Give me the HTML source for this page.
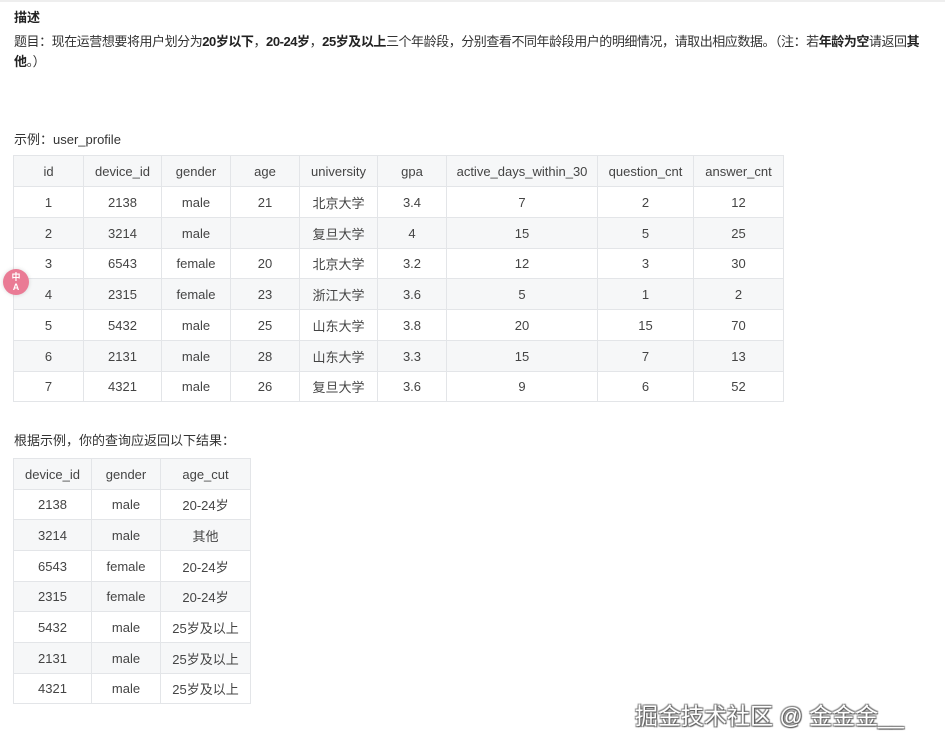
<!DOCTYPE html>
<html><head><meta charset="utf-8"><style>
body{margin:0;width:945px;height:747px;background:#fff;font-family:"Liberation Sans","Noto Sans CJK SC",sans-serif;color:#333;position:relative;overflow:hidden}
.t{position:absolute;font-size:13px}
table{position:absolute;border-collapse:collapse;table-layout:fixed;font-size:13px;color:#444}
td{border:1px solid #e3e5e8;text-align:center;padding:0;white-space:nowrap}
tr.h td,tr.g td{background:#f6f7f8}
b{font-weight:bold;color:#222}
</style></head><body>
<div style="position:absolute;left:0;top:0;width:945px;height:2px;background:#eee"></div>
<div class="t" style="left:14px;top:7px;font-weight:bold;color:#222">描述</div>
<div class="t" style="left:14px;top:32px;width:928px;line-height:20px;letter-spacing:-0.45px">题目：现在运营想要将用户划分为<b>20岁以下</b>，<b>20-24岁</b>，<b>25岁及以上</b>三个年龄段，分别查看不同年龄段用户的明细情况，请取出相应数据。（注：若<b>年龄为空</b>请返回<b>其他</b>。）</div>
<div class="t" style="left:14px;top:129px">示例：user_profile</div>
<table style="left:13px;top:155px;width:770px">
<colgroup><col style="width:70px"><col style="width:78px"><col style="width:69px"><col style="width:69px"><col style="width:78px"><col style="width:69px"><col style="width:151px"><col style="width:96px"><col style="width:90px"></colgroup>
<tr class="h" style="height:31px"><td>id</td><td>device_id</td><td>gender</td><td>age</td><td>university</td><td>gpa</td><td>active_days_within_30</td><td>question_cnt</td><td>answer_cnt</td></tr>
<tr style="height:31px"><td>1</td><td>2138</td><td>male</td><td>21</td><td>北京大学</td><td>3.4</td><td>7</td><td>2</td><td>12</td></tr>
<tr class="g" style="height:31px"><td>2</td><td>3214</td><td>male</td><td></td><td>复旦大学</td><td>4</td><td>15</td><td>5</td><td>25</td></tr>
<tr style="height:30px"><td>3</td><td>6543</td><td>female</td><td>20</td><td>北京大学</td><td>3.2</td><td>12</td><td>3</td><td>30</td></tr>
<tr class="g" style="height:31px"><td>4</td><td>2315</td><td>female</td><td>23</td><td>浙江大学</td><td>3.6</td><td>5</td><td>1</td><td>2</td></tr>
<tr style="height:31px"><td>5</td><td>5432</td><td>male</td><td>25</td><td>山东大学</td><td>3.8</td><td>20</td><td>15</td><td>70</td></tr>
<tr class="g" style="height:31px"><td>6</td><td>2131</td><td>male</td><td>28</td><td>山东大学</td><td>3.3</td><td>15</td><td>7</td><td>13</td></tr>
<tr style="height:30px"><td>7</td><td>4321</td><td>male</td><td>26</td><td>复旦大学</td><td>3.6</td><td>9</td><td>6</td><td>52</td></tr>
</table>
<div class="t" style="left:14px;top:430px">根据示例，你的查询应返回以下结果：</div>
<table style="left:13px;top:458px;width:237px">
<colgroup><col style="width:78px"><col style="width:69px"><col style="width:90px"></colgroup>
<tr class="h" style="height:31px"><td>device_id</td><td>gender</td><td>age_cut</td></tr>
<tr style="height:30px"><td>2138</td><td>male</td><td>20-24岁</td></tr>
<tr class="g" style="height:31px"><td>3214</td><td>male</td><td>其他</td></tr>
<tr style="height:31px"><td>6543</td><td>female</td><td>20-24岁</td></tr>
<tr class="g" style="height:30px"><td>2315</td><td>female</td><td>20-24岁</td></tr>
<tr style="height:31px"><td>5432</td><td>male</td><td>25岁及以上</td></tr>
<tr class="g" style="height:31px"><td>2131</td><td>male</td><td>25岁及以上</td></tr>
<tr style="height:30px"><td>4321</td><td>male</td><td>25岁及以上</td></tr>
</table>
<div style="position:absolute;left:3px;top:269px;width:26px;height:26px;border-radius:50%;background:#ea7b95;box-shadow:0 0 4px rgba(0,0,0,.15);color:#fff;font-size:9px;font-weight:bold;line-height:10px;text-align:center;padding-top:3px;box-sizing:border-box">中<br>A</div>
<div style="position:absolute;left:635px;top:697px;font-size:23px;color:#fff;text-shadow:1px 1px 1px #555,-1px -1px 1px #888,1px -1px 1px #777,-1px 1px 1px #777;white-space:nowrap;font-family:'Liberation Sans','Noto Sans CJK SC',sans-serif">掘金技术社区 @ 金金金__</div>
</body></html>
